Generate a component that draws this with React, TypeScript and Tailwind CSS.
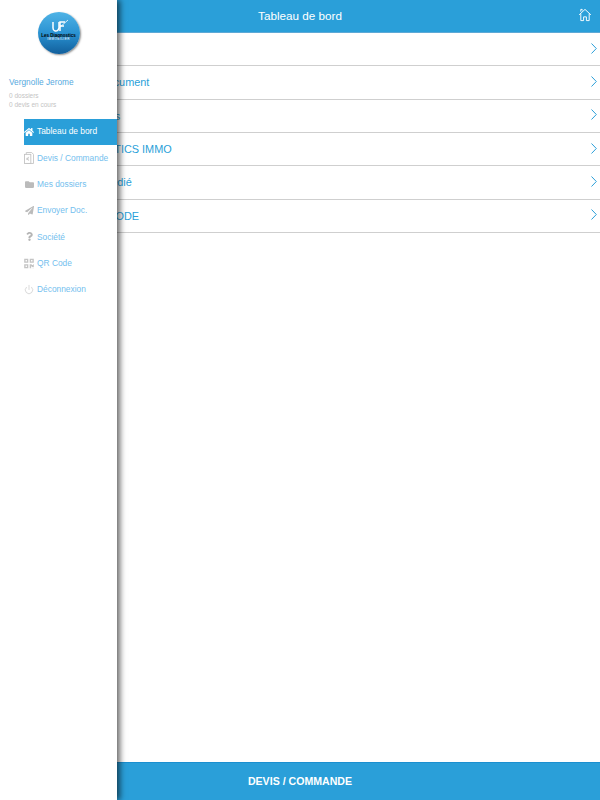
import { FaFolder, FaHome, FaPaperPlane, FaQrcode, FaQuestion } from 'react-icons/fa';
import { Power } from 'lucide-react';
import type { ReactNode } from 'react';

// la premiere ligne est entierement cachee par le menu
const rows = ['', 'Ajouter document', 'Mes photos', 'DIAGNOSTICS IMMO', 'Support dédié', 'Mon QR CODE'];

const DevisIcon = () => (
  <svg width="10" height="12" viewBox="0 0 11 13" fill="none" stroke="#c4c4c4" strokeWidth="1">
    <path d="M2.5 2.5V.5h6l2 2v10h-8" />
    <rect x=".5" y="2.5" width="7" height="10" />
    <path d="M5.6 5.6a1.8 1.8 0 1 0 0 3.6M2.4 6.9h2.6M2.4 8h2.6" strokeWidth=".8" />
  </svg>
);

const menu: { label: string; icon: ReactNode }[] = [
  { label: 'Tableau de bord', icon: <FaHome size={10} color="#fff" /> },
  { label: 'Devis / Commande', icon: <DevisIcon /> },
  { label: 'Mes dossiers', icon: <FaFolder size={9} color="#bbbbbb" /> },
  { label: 'Envoyer Doc.', icon: <FaPaperPlane size={9} color="#bbbbbb" /> },
  { label: 'Société', icon: <FaQuestion size={9} color="#b5b5b5" /> },
  { label: 'QR Code', icon: <FaQrcode size={11} color="#c4c4c4" /> },
  { label: 'Déconnexion', icon: <Power size={11} color="#b5b5b5" strokeWidth={1.2} /> },
];

const Logo = () => (
  <div className="relative h-[42px] w-[42px] overflow-hidden rounded-full bg-gradient-to-b from-[#4fb3e6] via-[#2a93d2] to-[#125f9c] shadow-[1px_1px_2px_rgba(0,0,0,0.45)]">
    <svg className="absolute left-[12px] top-[7px]" width="20" height="15" viewBox="0 0 20 15" fill="none" stroke="#fff">
      <path d="M3 3v6c0 3 3 4 5 2l1-2V3" strokeWidth="1.5" />
      <path d="M10 12V3h5M10 7h4" strokeWidth="1.5" />
      <path d="M9 9l9-8" strokeWidth=".8" />
    </svg>
    <div className="absolute left-0 right-0 top-[21px] text-center text-[4.5px] font-bold leading-[5px] text-black">Les Diagnostics</div>
    <div className="absolute left-0 right-0 top-[26px] text-center text-[3px] leading-[3px] tracking-[0.5px] text-white">IMMOBILIER</div>
  </div>
);

export default function App() {
  return (
    <div className="relative flex h-[800px] w-[600px] flex-col overflow-hidden bg-white font-['Liberation_Sans',sans-serif]">
      {/* contenu principal, le menu passe par dessus */}
      <header className="relative flex h-[33px] shrink-0 items-center justify-center border-b border-[#5ea9d6] bg-[#2a9fd9] text-[11.7px] text-white">
        Tableau de bord
        <svg className="absolute right-[8px] top-[8px]" width="14" height="14" viewBox="0 0 14 15" fill="none" stroke="#fff" strokeWidth="1">
          <path d="M.7 7.3 7 1.5l6.3 5.8M2.5 6v7.5h3V9.5h3v4h3V6M2.5 4V1.5h1.5v1.2" />
        </svg>
      </header>
      <main className="flex-1 pl-[64px]">
        {rows.map((row, i) => (
          <div key={i} className="flex h-[33.33px] items-center justify-between border-b border-[#cfcfcf] pr-[3px] text-[10.9px] text-[#2a9fd9]">
            <span>{row}</span>
            <svg className="mb-[2px]" width="6" height="11" viewBox="0 0 6 11" fill="none" stroke="#2a9fd9" strokeWidth="1">
              <path d="M.5.5 5.3 5.5.5 10.5" />
            </svg>
          </div>
        ))}
      </main>
      <button className="flex h-[38px] shrink-0 items-center justify-center border-t border-[#1b8fd0] bg-[#2a9fd9] text-[10.6px] font-bold text-white">
        DEVIS / COMMANDE
      </button>

      <aside className="absolute bottom-0 left-0 top-0 flex w-[117px] flex-col bg-white shadow-[3px_0_6px_rgba(0,0,0,0.6)]">
        <div className="flex justify-center pt-[12px]">
          <Logo />
        </div>
        <div className="pl-[9px] pt-[23px]">
          <div className="text-[8.3px] leading-[11px] text-[#55a9de]">Vergnolle Jerome</div>
          <div className="mt-[3px] text-[6.5px] leading-[9px] text-[#c4c4c4]">0 dossiers</div>
          <div className="text-[6.5px] leading-[9px] text-[#c4c4c4]">0 devis en cours</div>
        </div>
        <nav className="ml-[24px] mt-[9.5px] flex flex-col">
          {menu.map((item, i) => (
            <div
              key={item.label}
              className={
                i === 0
                  ? 'flex h-[26.3px] items-center bg-[#2a9fd9] text-[8.4px] text-white'
                  : 'flex h-[26.3px] items-center text-[8.4px] text-[#74c0ee]'
              }
            >
              <span className="mr-[3px] flex w-[10px] justify-center">{item.icon}</span>
              <span>{item.label}</span>
            </div>
          ))}
        </nav>
      </aside>
    </div>
  );
}
